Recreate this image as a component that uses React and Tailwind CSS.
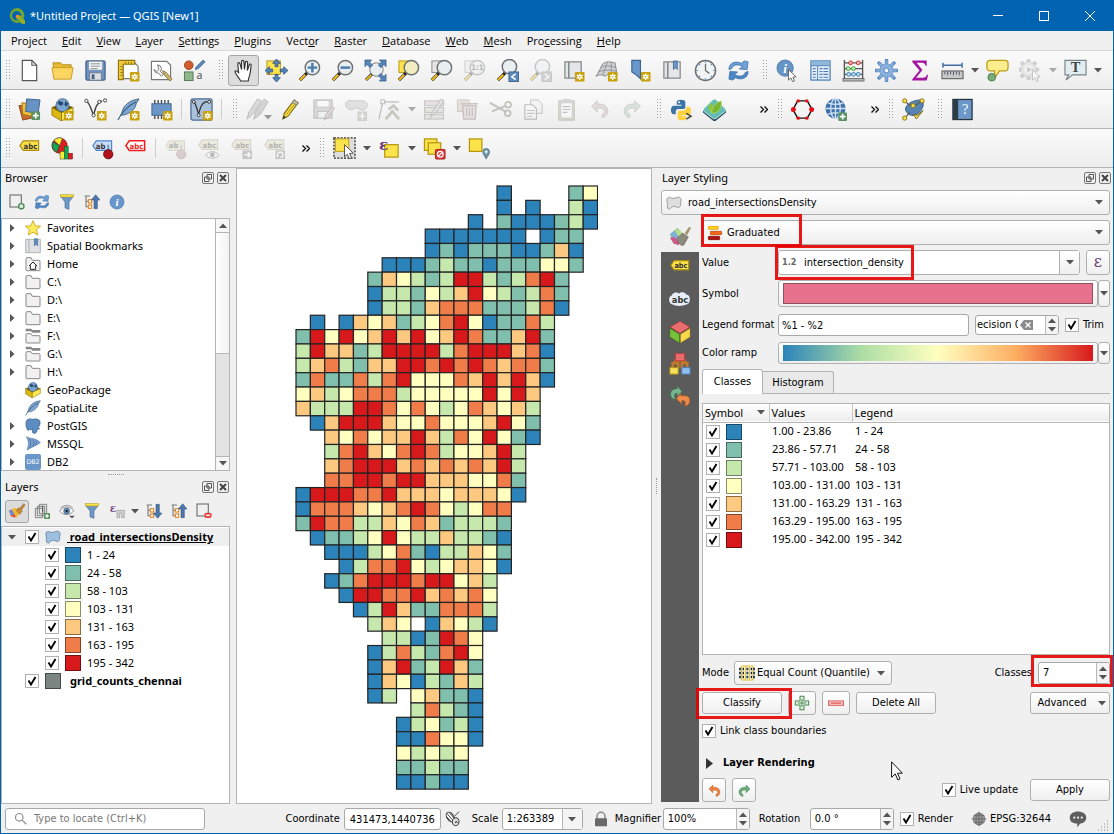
import React from "react";

const COLORS = ["", "#2b83ba", "#80bfab", "#c7e8ad", "#ffffbf", "#fdc980", "#f07c4a", "#d7191c"];

const GRID = [
  "..............1....24",
  "..............1.1..31",
  "............1.2111231",
  ".........1111111.122.",
  ".........12122211251.",
  "......11123221222442.",
  ".....25432377323672..",
  ".....13324357432362..",
  ".....13325666222361..",
  ".1.154523467412263...",
  "274745757457622572...",
  "375523777736777561...",
  "356325577676765662...",
  "262263674446575751...",
  "45346663444447475....",
  "53337764643465453....",
  ".1577754464445742....",
  "..546455753647421....",
  "..36754676344573.....",
  "..56777565656573.....",
  "..66776775554462.....",
  "1777667555455541.....",
  "166654567643466......",
  "276633546523332......",
  ".12234743353321......",
  "..1113462133542......",
  "...136674345541......",
  "..126777677453.......",
  "...17766756564.......",
  "....1375226663.......",
  ".....354.15431.......",
  "......3312764........",
  ".....13632674........",
  ".....15723752........",
  ".....15413253........",
  ".....13.45221........",
  "........36321........",
  ".......134231........",
  ".......116441........",
  ".......43434.........",
  ".......22322.........",
  ".......11211.........",
];

const CLASSES = [
  ["1.00 - 23.86", "1 - 24", "bg-[#2b83ba]"],
  ["23.86 - 57.71", "24 - 58", "bg-[#80bfab]"],
  ["57.71 - 103.00", "58 - 103", "bg-[#c7e8ad]"],
  ["103.00 - 131.00", "103 - 131", "bg-[#ffffbf]"],
  ["131.00 - 163.29", "131 - 163", "bg-[#fdc980]"],
  ["163.29 - 195.00", "163 - 195", "bg-[#f07c4a]"],
  ["195.00 - 342.00", "195 - 342", "bg-[#d7191c]"],
];

const MENUS = ["Pro_ject", "_Edit", "_View", "_Layer", "_Settings", "_Plugins", "Vect_or", "_Raster", "_Database", "_Web", "_Mesh", "Pro_cessing", "_Help"];

/* ---------- shared icon parts ---------- */

const Star = () => (
  <g>
    <rect x="13.5" y="13.5" width="10" height="10" rx="1" fill="#c8a20c" />
    <path d="M18.5 15v7M15.5 16.8l6 3.4M21.500 16.800l-6 3.400" stroke="#fff" strokeWidth="1.400" />
    <circle cx="18.500" cy="18.500" r="2" fill="#fff" />
    <circle cx="18.500" cy="18.500" r="0.800" fill="#c8a20c" />
  </g>
);
const Plus = ({ x = 14, y = 14 }) => (
  <g>
    <rect x={x} y={y} width="9" height="9" rx="1" fill="#5a9161" />
    <path d={`M${x + 4.5} ${y + 1.5}v6M${x + 1.5} ${y + 4.5}h6`} stroke="#fff" strokeWidth="1.800" />
  </g>
);
const Cursor = ({ t }) => (
  <path transform={t} d="M0 0l0 11 2.600-2.200 1.800 3.900 2-.9-1.800-3.800 3.400-.3z" fill="#fff" stroke="#555" strokeWidth="0.900" />
);
const Lens = ({ cx = 15, cy = 9, fill = "#e9eef0", children }) => (
  <g>
    <path d="M9.500 14.500L2 22" stroke="#222" strokeWidth="3.200" />
    <path d="M7.500 16.500L2.200 21.800" stroke="#f3bd1b" strokeWidth="2.200" />
    <circle cx={cx} cy={cy} r="7.500" fill={fill} stroke="#6d7072" strokeWidth="1.500" />
    {children}
  </g>
);
const Tag = ({ fill, stroke, text, color, y = 6 }) => (
  <g>
    <path d={`M2 ${y + 5}l3.500-5h16v10h-16z`} fill={fill} stroke={stroke} strokeWidth="1.200" />
    <text x="13" y={y + 8} textAnchor="middle" fontSize="8" fontWeight="bold" fontFamily="DejaVu Sans Condensed, sans-serif" fill={color}>{text}</text>
  </g>
);
const RefreshShape = () => (
  <g>
    <path d="M2 11C2 4 9 1.500 15 4.500L18 2l4 1-1 8-8-.5 3-3C11 5 6 6 5 10z" fill="#6fa2d8" stroke="#3a6ea5" strokeWidth="0.800" />
    <path d="M22 13c0 7-7 9.500-13 6.500L6 22l-4-1 1-8 8 .5-3 3c5 2.500 10 1.500 11-2.500z" fill="#4b86c6" stroke="#3a6ea5" strokeWidth="0.800" />
  </g>
);
const FilterShape = () => (
  <g>
    <path d="M2 3h20l-7 9v11l-6-2v-9z" fill="#6d97c4" stroke="#4a6f9c" strokeWidth="1" />
    <rect x="2" y="1" width="20" height="3.500" fill="#f7e04b" stroke="#b59a18" strokeWidth="0.800" />
  </g>
);
const GeoPkg = () => (
  <g>
    <path d="M1 10l10-4 12 4-12 6z" fill="#6b5200" stroke="#8a6d00" strokeWidth="1" />
    <circle cx="12" cy="7.500" r="6.800" fill="#7ba5d1" stroke="#335b87" strokeWidth="0.800" />
    <path d="M8 3l4 1 1 2.500-3 1.500-3-2zM15 3l3 3-2 3-2-2z" fill="#27476d" />
    <path d="M1 10l10 5.500V24L1 18z" fill="#dcb814" stroke="#8a6d00" strokeWidth="0.800" />
    <path d="M11 15.500l12-5.500V17l-12 7z" fill="#fcea52" stroke="#8a6d00" strokeWidth="0.800" />
  </g>
);
const Feather = ({ fill = "#7ea6d0" }) => (
  <g>
    <path d="M23 1C13 2 6 8 5 16l-1 2c7 0 15-5 16-12z" fill={fill} stroke="#3d5d80" strokeWidth="0.900" />
    <path d="M1 23C5 15 12 8 20 4" stroke="#3d5d80" fill="none" strokeWidth="1.200" />
  </g>
);
const TreeArrow = ({ up }) => (
  <g>
    <path d="M1 3h8M3 3v17M3 11h4M3 19h4" stroke="#777" strokeWidth="1.600" fill="none" />
    <rect x="6.500" y="8.500" width="5" height="5" fill="#fff" stroke="#e0801c" strokeWidth="1.600" />
    <rect x="6.500" y="16.500" width="5" height="5" fill="#fff" stroke="#e0801c" strokeWidth="1.600" />
    <path d={up ? "M15 22V9h-4l6.500-8L24 9h-4v13z" : "M15 2v13h-4l6.500 8L24 15h-4V2z"} fill="#4c77aa" stroke="#2e5280" strokeWidth="0.800" />
  </g>
);
const Poly = ({ fill = "#9dc0de", stroke = "#5d7f9d" }) => (
  <path d="M2 5c4-3 6 1 10 0s8-3 10 0-1 6 0 9-3 6-6 4-7-1-9 2-6 0-5-4-2-8 0-11z" fill={fill} stroke={stroke} strokeWidth="1.200" />
);
const CurveArrow = ({ fill, stroke }) => (
  <path d="M2 9l7-7v4c8 0 13 3 13 9 0 4-3 7-7 8v-4c2-1 3-2 3-4 0-3-4-4-9-4v5z" fill={fill} stroke={stroke} strokeWidth="1" />
);
const Roll = () => (
  <g>
    <path d="M3 3h4v17H3zM7 3h13v17H5" fill="#e4e6e7" stroke="#85898b" strokeWidth="1.300" />
    <path d="M7 3v17" stroke="#85898b" strokeWidth="1.300" />
  </g>
);
const Mag = ({ children }) => <g opacity="0.35">{children}</g>;

/* ---------- icons ---------- */

const ICONS = {
  newFile: <g><path d="M4.500 1.500h10l5 5v16h-15z" fill="#fff" stroke="#555" strokeWidth="1.200" /><path d="M14.500 1.500v5h5" fill="none" stroke="#555" strokeWidth="1.200" /></g>,
  open: <g><path d="M2 4h8l2 2h9v5H3z" fill="#e8b933" stroke="#b58d1d" /><path d="M3 21L1 9h22l-2 12z" fill="#fcd562" stroke="#c99c24" /></g>,
  save: <g><rect x="2" y="2" width="20" height="20" rx="1.500" fill="#6e93c0" stroke="#45628a" strokeWidth="1.300" /><rect x="5" y="2.500" width="14" height="9" fill="#f4f6f7" stroke="#8593a1" strokeWidth="0.600" /><path d="M7 5h10M7 7.500h10M7 10h7" stroke="#8b9298" /><rect x="6" y="14.500" width="12" height="7.500" fill="#dcdfe1" stroke="#6a7683" strokeWidth="0.700" /><rect x="8" y="16" width="3" height="5" fill="#45628a" /></g>,
  layout: <g><path d="M6 3.500h12l4 4v13H6z" fill="#fff" stroke="#777" strokeWidth="1.200" /><path d="M1.500 1.500h17v4H6.500v16h-5z" fill="#f0c93a" stroke="#8f7410" strokeWidth="1.200" /><path d="M6 8H3.500M6 11H3.500M6 14H3.500M6 17H3.500M9 5V3M12 5V3M15 5V3" stroke="#8f7410" /><Star /></g>,
  manager: <g><path d="M1.500 2.500h16l4 4v15h-20z" fill="#fff" stroke="#777" strokeWidth="1.200" /><path d="M8 6a4.500 4.500 0 014 4l-1 3 3 3-2 2-3-3a5 5 0 01-5-4l3 2 2-2z" fill="#eee" stroke="#777" /><path d="M13 12l4 2 6 7-2 2-6-6z" fill="#c9b263" stroke="#7c6d35" strokeWidth="0.800" /></g>,
  style: <g><circle cx="6" cy="6.500" r="4.500" fill="#cf5c2e" stroke="#a14420" /><path d="M13 9l8-8 2 2-7 7-3 1z" fill="#5f8bbd" stroke="#3b6390" strokeWidth="0.800" /><rect x="1.500" y="13.500" width="9" height="9" fill="#8fb98d" stroke="#557a54" /><text x="14" y="21" fontSize="11" fontFamily="Open Sans, sans-serif" fill="#444">a</text></g>,
  hand: <path d="M8 23c-1-3-5-6-6-10 1-1.500 3-.5 4 2L5 5c.2-1.600 2-1.600 2.400 0L9 11 9 2.500c.2-1.500 2.200-1.500 2.400 0L12 11l1-7.500c.3-1.500 2.200-1.300 2.300.2L15 12l2-6c.5-1.300 2.200-.8 2 .6-.7 4-.5 9-2.500 13L16 23z" transform="translate(1 0)" fill="#fff" stroke="#333" strokeWidth="1.200" />,
  pan: <g><rect x="2" y="2" width="14" height="14" fill="#fbe34b" stroke="#b79612" /><path d="M12 0l4 4.500h-2.500V8h-3V4.500H8zM12 24l4-4.500h-2.500V16h-3v3.500H8zM0 12l4.500-4v2.500H8v3H4.500V16zM24 12l-4.500-4v2.500H16v3h3.500V16z" fill="#5584b8" stroke="#2e5280" strokeWidth="0.800" /></g>,
  zoomIn: <Lens><path d="M15 4v10M10 9h10" stroke="#4c7bb0" strokeWidth="2.600" /></Lens>,
  zoomOut: <Lens><path d="M10 9h10" stroke="#4c7bb0" strokeWidth="2.600" /></Lens>,
  zoomFull: <g><path d="M9 15l-7 7" stroke="#222" strokeWidth="3" /><path d="M7.500 16.500L2.200 21.800" stroke="#f3bd1b" strokeWidth="2" /><circle cx="13" cy="11" r="7" fill="#e9eef0" stroke="#777" /><path d="M1 1h7L5.800 3.200 9 6.500 6.500 9 3.200 5.800 1 8zM23 1h-7l2.200 2.200L15 6.500 17.500 9l3.300-3.200L23 8zM23 23h-7l2.200-2.200L15 17.500l2.500-2.500 3.300 3.200L23 16z" fill="#5584b8" stroke="#2e5280" strokeWidth="0.700" /></g>,
  zoomSel: <g><rect x="2" y="2" width="12" height="12" fill="#fbe34b" stroke="#b79612" /><Lens fill="#f1ecc0" /></g>,
  zoomLayer: <g><rect x="2" y="2" width="12" height="12" fill="#e6e6e6" stroke="#888" /><Lens /></g>,
  zoomNative: <Mag><rect x="2" y="2" width="12" height="12" fill="#e6e6e6" stroke="#888" /><Lens><text x="15" y="12" textAnchor="middle" fontSize="8" fontWeight="bold" fontFamily="DejaVu Sans Condensed, sans-serif" fill="#333">1:1</text></Lens></Mag>,
  zoomLast: <g><Lens cx="14" cy="8" /><rect x="13.500" y="13.500" width="10" height="10" fill="#5c8abd" stroke="#40658f" /><path d="M20.500 15.500l-4 3 4 3" stroke="#fff" strokeWidth="1.600" fill="none" /></g>,
  zoomNext: <Mag><Lens cx="14" cy="8" /><rect x="13.500" y="13.500" width="10" height="10" fill="#999" stroke="#777" /><path d="M16.500 15.500l4 3-4 3" stroke="#fff" strokeWidth="1.600" fill="none" /></Mag>,
  newMap: <g><Roll /><Star /></g>,
  new3d: <g><path d="M8 5c4-3 8-2 13-1l2 13c-5-3-9-2-12 1-4-2-7-2-10 0 3-4 5-9 7-13z" fill="#cfd1d2" stroke="#85898b" /><path d="M6 9c5-3 10-2 16 0M3 14c5-3 12-3 20-1M13 3L8 17M17 3l0 12" stroke="#85898b" strokeWidth="0.800" fill="none" /><Star /></g>,
  bookmarkNew: <g><path d="M4 1.500h9v19l-4.500-4-4.500-3z" fill="#6b97ca" stroke="#3d6593" strokeWidth="1.200" /><Star /></g>,
  bookmarks: <g><Roll /><path d="M13 2h4v9l-2-2-2 2z" fill="#6b97ca" stroke="#3d6593" strokeWidth="0.800" /></g>,
  clock: <g><circle cx="12" cy="12" r="10.500" fill="#f1f3f4" stroke="#6d7072" strokeWidth="1.500" /><path d="M12 5v7l4 3" fill="none" stroke="#6d7072" strokeWidth="1.400" /><path d="M12 2.500v1.500M12 20v1.500M2.500 12H4M20 12h1.500M5.300 5.300l1 1M17.700 17.700l1 1M18.700 5.300l-1 1M6.300 17.700l-1 1" stroke="#4c88c4" strokeWidth="1.200" /></g>,
  refresh: <RefreshShape />,
  identify: <g><circle cx="9.500" cy="9.500" r="8.500" fill="#6594c6" stroke="#44719f" strokeWidth="0.800" /><text x="9.500" y="14.500" textAnchor="middle" fontSize="14" fontWeight="bold" fontStyle="italic" fontFamily="Liberation Serif, serif" fill="#fff">i</text><Cursor t="translate(13 11)" /></g>,
  attrs: <g><rect x="2" y="2" width="20" height="20" fill="#e3eefa" stroke="#4f7fb5" strokeWidth="1.300" /><rect x="2.500" y="2.500" width="19" height="4" fill="#8bb8dc" /><path d="M2 7h20M9 7v15" stroke="#4f7fb5" /><path d="M4 10h3M4 13h3M4 16h3M4 19h3M11 10h3M15 10h5M11 13h3M15 13h5M11 16h3M15 16h5M11 19h3M15 19h5" stroke="#4f7fb5" strokeWidth="1.200" /></g>,
  abacus: <g><path d="M2.500 1v21M21.500 1v21M2 4h20M2 10h20M2 16h20" stroke="#555" strokeWidth="1.400" /><rect x="1" y="20.500" width="22" height="2.500" fill="#bbb" stroke="#555" strokeWidth="0.800" /><g fill="#f3b2b2" stroke="#cc2b2b"><circle cx="9" cy="4" r="2" /><circle cx="17" cy="4" r="2" /></g><g fill="#c0eec0" stroke="#35a035"><circle cx="6.500" cy="10" r="2" /><circle cx="12" cy="10" r="2" /></g><g fill="#bcdcf2" stroke="#3b7db5"><circle cx="7" cy="16" r="2" /><circle cx="12" cy="16" r="2" /><circle cx="17" cy="16" r="2" /></g></g>,
  gear: <g><path d="M12 1v22M1 12h22M4.200 4.200l15.600 15.600M19.800 4.200L4.200 19.800" stroke="#5788bf" strokeWidth="3.600" strokeLinecap="round" /><path d="M12 2v20M2 12h20M5 5l14 14M19 5L5 19" stroke="#8ab0dc" strokeWidth="2" strokeLinecap="round" /><circle cx="12" cy="12" r="7" fill="#8ab0dc" stroke="#6d99cb" strokeWidth="0.800" /><circle cx="12" cy="12" r="2.500" fill="#eef3f8" stroke="#5788bf" /></g>,
  sigma: <path d="M4.500 1.500h15v5.500h-1.200c-.6-2-1.500-3-3.800-3H9l6 7.500-6.500 8h7c2.500 0 3.500-1 4.300-3H21L19.500 22.500h-15v-1.500L12 12 4.500 3z" fill="#a3159e" />,
  measure: <g><path d="M2 6.500h20M2 4v5M22 4v5" stroke="#3f6da3" strokeWidth="1.500" /><rect x="1" y="12.500" width="22" height="8" fill="#c6cacc" stroke="#666" strokeWidth="1.200" /><path d="M4 13v3M7 13v4M10 13v3M13 13v4M16 13v3M19 13v4" stroke="#555" /></g>,
  tip: <g><path d="M4 1.500h16a3 3 0 013 3v5a3 3 0 01-3 3h-6L9 20v-7.500H4a3 3 0 01-3-3v-5a3 3 0 013-3z" fill="#fcee8c" stroke="#bd9b12" strokeWidth="1.300" /><circle cx="6" cy="19" r="4" fill="#7cab7b" stroke="#4f8150" /></g>,
  action: <Mag><path d="M10 2v18M1 11h18M3.600 4.600l12.800 12.800M16.400 4.600L3.600 17.400" stroke="#888" strokeWidth="4.500" strokeLinecap="round" /><circle cx="10" cy="11" r="7.500" fill="#ccc" stroke="#aaa" /><circle cx="10" cy="11" r="4.500" fill="#eee" /><path d="M8.500 8l5 3-5 3z" fill="#777" /><Cursor t="translate(14 11)" /></Mag>,
  textNote: <g><path d="M1 1.500h22v15H9L2 22l3-5.500H1z" fill="#e2edf1" stroke="#7a8388" strokeWidth="1.200" /><text x="12" y="14" textAnchor="middle" fontSize="15" fontWeight="bold" fontFamily="Liberation Serif, serif" fill="#444">T</text></g>,

  addLayer: <g><path d="M1 8l11-1 2 14-9 2z" fill="#c96a2d" stroke="#8d4516" /><path d="M4 5l13 1-3 13-9-2z" fill="#f0bf3c" stroke="#a47b13" /><path d="M9 1l14 1-2 14-13-2z" fill="#6892c2" stroke="#3c6290" /><Plus /></g>,
  gpkgNew: <g><GeoPkg /><Star /></g>,
  shpNew: <g><path d="M3 4c3 1 5 10 7 14 2-8 3-13 9-15" fill="none" stroke="#444" strokeWidth="1.500" /><g fill="#fff" stroke="#444"><circle cx="2.500" cy="3" r="1.700" /><circle cx="10" cy="18" r="1.700" /><circle cx="16" cy="4" r="1.700" /><circle cx="22" cy="2.500" r="1.700" /></g><Star /></g>,
  liteNew: <g><Feather /><Star /></g>,
  memNew: <g><path d="M5 2v20M8.500 2v20M12 2v20M15.500 2v20M19 2v20" stroke="#444" strokeWidth="1.400" /><rect x="2" y="6" width="20" height="12" fill="#6c96c8" stroke="#3f6592" /><Star /></g>,
  virtNew: <g><rect x="1" y="1" width="22" height="22" rx="2" fill="#a9c1da" stroke="#486b92" strokeWidth="1.300" /><path d="M4 4c2 1 4 10 5 13 2-8 3-11 7-13l4 0" fill="none" stroke="#333" strokeWidth="1.300" /><g fill="#fff" stroke="#333"><circle cx="4" cy="4" r="1.500" /><circle cx="9" cy="18" r="1.500" /><circle cx="20" cy="4" r="1.500" /></g><Star /></g>,
  edits: <Mag><path d="M1 22l2-7L12 1l4 2-8 13z" fill="#aaa" stroke="#555" /><path d="M8 22l2-7L19 1l4 3-8 13z" fill="#999" stroke="#555" /></Mag>,
  pencil: <g><path d="M4 22l1.500-6L16 2l4 3L9.500 19z" fill="#f5dd3f" stroke="#77651a" strokeWidth="1.100" /><path d="M14 4.500l4 3 2-2.500-4-3z" fill="#bdbdbd" stroke="#777" strokeWidth="0.800" /><path d="M4 22l1-3.500L7.500 20z" fill="#333" /><path d="M7.500 17.500L17 5.500" stroke="#b59a18" /></g>,
  saveEdits: <Mag><rect x="2" y="2" width="19" height="19" fill="#aaa" stroke="#555" /><rect x="5" y="2.500" width="13" height="7" fill="#fff" stroke="#777" /><rect x="6" y="14" width="10" height="7" fill="#eee" stroke="#666" /><path d="M13 23l1-5 7-9 2.500 2-7 9z" fill="#baa" stroke="#544" /></Mag>,
  addPoly: <Mag><path d="M1 5c3-4 7-2 11-2s10-1 11 3-3 8-7 6-5-2-8 0-9-3-7-7z" fill="#bbb" stroke="#777" /><rect x="13" y="14" width="10" height="10" fill="#998" /><path d="M18 15.500v7M15 19h6" stroke="#fff" strokeWidth="1.500" /></Mag>,
  vertex: <Mag><path d="M5 4h17M5 4L1 22" stroke="#555" strokeWidth="1.300" /><rect x="3" y="2" width="4" height="4" fill="#fff" stroke="#444" /><path d="M8 22l8-9M11 12l5-4 5 5M14 13l8 9" stroke="#776" strokeWidth="2.800" fill="none" /></Mag>,
  multi: <Mag><rect x="1.500" y="3" width="20" height="5" fill="#cbb" stroke="#666" /><rect x="1.500" y="10" width="20" height="5" fill="#ccb" stroke="#666" /><rect x="1.500" y="17" width="20" height="5" fill="#ccb" stroke="#666" /><path d="M8 20l2-6 9-13 3 2-9 13z" fill="#bbb" stroke="#555" /></Mag>,
  trash: <Mag><rect x="1.500" y="2" width="12" height="12" fill="#cba" stroke="#877" /><path d="M7 8h14l-1 14H8zM5 6h18" fill="#ccc" stroke="#866" strokeWidth="1.500" /><path d="M11 10v9M14 10v9M17 10v9" stroke="#866" strokeWidth="1.500" /></Mag>,
  cut: <Mag><path d="M1 5l16 9M3 14L18 8" stroke="#665" strokeWidth="2" /><circle cx="20" cy="7" r="3" fill="none" stroke="#665" strokeWidth="1.800" /><circle cx="19.500" cy="16" r="3" fill="none" stroke="#665" strokeWidth="1.800" /></Mag>,
  copy: <Mag><path d="M9 2h8l4 4v10H9z" fill="#eee" stroke="#666" /><path d="M3 7h8l4 4v11H3z" fill="#fff" stroke="#555" strokeWidth="1.200" /><path d="M5 13h8M5 16h8M5 19h6" stroke="#666" strokeWidth="1.200" /></Mag>,
  paste: <Mag><rect x="4" y="3" width="16" height="20" fill="#cca" stroke="#665" strokeWidth="1.200" /><rect x="6" y="5" width="12" height="16" fill="#fff" stroke="#777" /><rect x="8" y="1" width="8" height="4" fill="#999" /><path d="M8 9h8M8 12h8M8 15h5" stroke="#666" strokeWidth="1.200" /></Mag>,
  undoOff: <Mag><g transform="translate(2 1) scale(0.850)"><CurveArrow fill="#baa" stroke="#877" /></g></Mag>,
  redoOff: <Mag><g transform="translate(22 1) scale(-0.850 0.850)"><CurveArrow fill="#aba" stroke="#787" /></g></Mag>,
  python: <g><path d="M7 9V4c0-3 9-3 9 0v5c0 2-1 2.500-3 2.500H9c-2 0-3 1-3 3V17H4c-4 0-4-9 0-9h8V7H7z" fill="#3d74a6" /><path d="M17 9h2c4 0 4 9 0 9h-7v1h5v2c0 3-9 3-9 0v-5c0-2 1-3 3-3h3c2 0 3-1 3-2.500z" fill="#fed23e" /><circle cx="9.500" cy="4.500" r="1" fill="#fff" /><path d="M17 16l5 3-5 3" fill="none" stroke="#444" strokeWidth="1.500" /></g>,
  leaf: <g><path d="M0 13v2l11 9h2l11-9v-2z" fill="#244b5c" /><path d="M1 11L10 2c1-1 3-1 4 0l9 9c1 1 1 2 0 3l-9 7c-1 1-3 1-4 0L1 14c-1-1-1-2 0-3z" fill="#62bdb6" stroke="#e4f2f2" strokeWidth="0.800" /><path d="M6 12c-1-4 1-6 3-7 2 4 2 8 0 11z" fill="#8fc63d" /><path d="M9 16c0-7 4-11 10-13 1 7-2 13-10 13z" fill="#7ab530" stroke="#b4da6c" strokeWidth="0.800" /></g>,
  hex: <g><path d="M7 3h10l5 9-5 9H7l-5-9z" fill="none" stroke="#111" strokeWidth="1.500" /><g fill="#ea0c13"><circle cx="2.500" cy="12" r="2.600" /><circle cx="21.500" cy="12" r="2.600" /><circle cx="7.500" cy="3" r="1.800" /><circle cx="16.500" cy="3" r="1.800" /><circle cx="7.500" cy="21" r="1.800" /><circle cx="16.500" cy="21" r="1.800" /></g></g>,
  globeAdd: <g><circle cx="12" cy="11" r="10.500" fill="#3e73ae" /><path d="M12 .5v21M2 11h21M4 5c5 2 11 2 16 0M4 17c5-2 11-2 16 0" stroke="#cfe0f0" strokeWidth="1.400" fill="none" /><ellipse cx="12" cy="11" rx="5" ry="10.500" fill="none" stroke="#cfe0f0" strokeWidth="1.400" /><Plus x={15} y={15} /></g>,
  topo: <g><path d="M6 7c4-4 10-5 14-5 4 3 2 9-2 13s-9 4-12 1-3-6 0-9z" fill="#5884b4" stroke="#34587f" /><path d="M3 3l4 4 5 2 9-6M3 21l5-6" stroke="#555" strokeWidth="1.200" fill="none" /><g fill="#f8e04a" stroke="#8c7716"><circle cx="2.800" cy="3" r="2.200" /><circle cx="21" cy="3" r="2.200" /><circle cx="11.500" cy="8" r="2.200" /><circle cx="2.800" cy="21" r="2.200" /></g><path d="M12 17l3 5 7-9-6 5z" fill="#f8e04a" stroke="#6f5d10" strokeWidth="0.900" /></g>,
  help: <g><rect x="2" y="1.500" width="20" height="21" fill="#6c97c9" stroke="#26323c" strokeWidth="1.300" /><rect x="2" y="1.500" width="5.500" height="21" fill="#2b3b47" /><text x="14.800" y="17" textAnchor="middle" fontSize="15" fontFamily="Liberation Serif, serif" fill="#fff">?</text></g>,

  labelY: <Tag fill="#fbe04a" stroke="#a98b0d" text="abc" color="#333" y={4} />,
  pie: <g><circle cx="9" cy="9" r="8" fill="#d81e1e" stroke="#7b1010" strokeWidth="0.600" /><path d="M9 9L3 3.500A8 8 0 0112 1.500z" fill="#f9ed2e" stroke="#333" strokeWidth="0.600" /><path d="M9 9l-7-4a8 8 0 004 11z" fill="#18a551" stroke="#333" strokeWidth="0.600" /><rect x="9.500" y="15" width="4.500" height="8" fill="#f9ed2e" stroke="#333" strokeWidth="0.500" /><rect x="14" y="10" width="4" height="13" fill="#18a551" stroke="#0a5c2a" strokeWidth="0.500" /><rect x="18" y="17" width="4.500" height="6" fill="#d81e1e" stroke="#7b1010" strokeWidth="0.500" /></g>,
  labelPin: <g><path d="M2 9l3.500-5h16v10h-16z" fill="#c9defa" stroke="#4f86c9" strokeWidth="1.200" /><text x="10" y="12" textAnchor="middle" fontSize="8" fontWeight="bold" fontFamily="DejaVu Sans Condensed, sans-serif" fill="#333">ab</text><path d="M18 8v8" stroke="#7a99b8" strokeWidth="2" /><circle cx="18" cy="18" r="4.800" fill="#b5121b" stroke="#6f0a10" /></g>,
  labelR: <g><path d="M2 9l3.500-5h16v10h-16z" fill="#fff" stroke="#ef1b1d" strokeWidth="1.600" /><text x="13" y="12" textAnchor="middle" fontSize="8" fontWeight="bold" fontFamily="DejaVu Sans Condensed, sans-serif" fill="#ef1b1d">abc</text></g>,
  labelPinOff: <Mag><path d="M2 9l3.500-5h16v10h-16z" fill="#ddd8b0" stroke="#998" /><text x="10" y="12" textAnchor="middle" fontSize="8" fontWeight="bold" fontFamily="DejaVu Sans Condensed, sans-serif" fill="#333">ab</text><path d="M18 8v8" stroke="#999" strokeWidth="2" /><circle cx="18" cy="18" r="4.800" fill="#a88" stroke="#866" /></Mag>,
  labelEye: <Mag><Tag fill="#ddd8b0" stroke="#998" text="abc" color="#333" y={3} /><path d="M9 19c4-5 10-5 14 0-4 4-10 4-14 0z" fill="#fff" stroke="#555" /><circle cx="16" cy="18.500" r="2.500" fill="#555" /></Mag>,
  labelMove: <Mag><Tag fill="#ddd8b0" stroke="#998" text="abc" color="#333" y={3} /><rect x="13" y="14" width="10" height="9" fill="#777" /><path d="M15 18.500h6M18.500 16l2.500 2.500-2.500 2.500" stroke="#fff" strokeWidth="1.600" fill="none" /></Mag>,
  labelRot: <Mag><Tag fill="#ddd8b0" stroke="#998" text="abc" color="#333" y={3} /><rect x="13" y="14" width="10" height="9" fill="#777" /><path d="M16 21a3 3 0 114 0l-2 0" stroke="#fff" strokeWidth="1.500" fill="none" /></Mag>,
  select: <g><rect x="1" y="1" width="22" height="21" fill="#dedede" stroke="#222" strokeDasharray="2 1.500" strokeWidth="1.300" /><rect x="2.500" y="2" width="14" height="13" fill="#fbe34b" stroke="#c09d10" /><Cursor t="translate(12 8) scale(1.150)" /></g>,
  selExpr: <g><rect x="7" y="8" width="14" height="13" fill="#fbe34b" stroke="#b8960d" strokeWidth="1.300" /><text x="1" y="14" fontSize="16" fontWeight="bold" fontFamily="DejaVu Serif, serif" fill="#6b3d78">ε</text></g>,
  deselect: <g><rect x="1.500" y="2" width="13" height="12" fill="#fbe34b" stroke="#b8960d" strokeWidth="1.300" /><rect x="5.500" y="6" width="13" height="12" fill="#fbe34b" stroke="#b8960d" strokeWidth="1.300" /><rect x="13" y="13" width="10" height="10" rx="1" fill="#d93a3a" stroke="#b01c1c" /><circle cx="18" cy="18" r="3" fill="none" stroke="#fff" strokeWidth="1.300" /><path d="M16 20l4-4" stroke="#fff" strokeWidth="1.300" /></g>,
  selLoc: <g><rect x="1.500" y="2" width="13" height="13" fill="#fbe34b" stroke="#b8960d" strokeWidth="1.300" /><path d="M19 23c-2-4-3.500-5-3.500-7.500a3.500 3.500 0 017 0C22.500 18 21 19 19 23z" fill="#6c93a8" stroke="#4a6c7f" strokeWidth="0.800" /><path d="M19 13.500v4M17 15.500h4" stroke="#fff" /></g>,

  addSq: <g><rect x="1.500" y="1.500" width="17" height="18" fill="none" stroke="#777" strokeWidth="1.800" /><circle cx="18.500" cy="18.500" r="4" fill="#d9ead9" stroke="#4e8a55" strokeWidth="2" /></g>,
  filter: <FilterShape />,
  treeUp: <TreeArrow up />,
  treeDown: <TreeArrow />,
  info: <g><circle cx="12" cy="12" r="10.500" fill="#6896cb" stroke="#4674a8" /><text x="12" y="18" textAnchor="middle" fontSize="17" fontWeight="bold" fontStyle="italic" fontFamily="Liberation Serif, serif" fill="#fff">i</text></g>,
  star: <path d="M12 1l3.300 7.500 8 .7-6 5.400 1.800 8L12 18.300l-7.100 4.300 1.800-8-6-5.400 8-.7z" fill="#fdec5b" stroke="#c79d14" strokeWidth="1.200" />,
  book: <g><path d="M1 2h22v20H1z" fill="#dfe1e2" /><path d="M6 2v20M1 2h22v20H1z" fill="none" stroke="#a3a7aa" strokeWidth="1.200" /><path d="M14 1h5v11l-2.500-3-2.500 3z" fill="#5e89bb" stroke="#3d6593" strokeWidth="0.800" /></g>,
  folder: <path d="M1.500 4a1.500 1.500 0 011.500-1.500h6l2 4h10a1.500 1.500 0 011.500 1.500v13a1 1 0 01-1 1h-19a1 1 0 01-1-1z" fill="#f1f1f1" stroke="#888" strokeWidth="1.500" />,
  home: <g><path d="M1.500 4a1.500 1.500 0 011.500-1.500h6l2 4h10a1.500 1.500 0 011.500 1.500v13a1 1 0 01-1 1h-19a1 1 0 01-1-1z" fill="#f1f1f1" stroke="#888" strokeWidth="1.500" /><path d="M6 15l6-6 6 6M8 14v6h8v-6" fill="#fff" stroke="#222" strokeWidth="1.500" /></g>,
  drive: <g><path d="M1.500 10a1.500 1.500 0 011.500-1.500h6l2 3h10a1.500 1.500 0 011.500 1.500v8.500a1 1 0 01-1 1h-19a1 1 0 01-1-1z" fill="#f1f1f1" stroke="#888" strokeWidth="1.500" /><path d="M1 1h8l2 2h12v4H11L9 5H1z" fill="#888" /></g>,
  gpkg: <GeoPkg />,
  lite: <Feather />,
  pg: <path d="M3 3c4-3 7-1 9-1 3-1 8-1 10 2 2 4-1 9-3 11l3 1-4 1c0 4-1 6-4 6s-3-2-3-7c-1 2-3 2-4 1l-2 2c-3-2-5-12-2-16z" fill="#5d8dc0" stroke="#3c6590" strokeWidth="1.200" />,
  ms: <g><path d="M2 1c6 4 14 1 21 9-6 4-12 6-20 11 3-7 3-14-1-20z" fill="#7aa2cf" stroke="#4c77a6" /><path d="M7 4c2 5 2 9 0 14M12 5c2 4 1 8 0 11M17 7c1 2 0 4-1 7" fill="none" stroke="#456f9f" strokeWidth="1.300" /></g>,
  db2: <g><rect x="0" y="0" width="24" height="24" rx="3" fill="#6a96c9" /><text x="12" y="15.500" textAnchor="middle" fontSize="9.500" fontFamily="DejaVu Sans, sans-serif" fill="#fff">DB2</text></g>,
  paintbrush: <g><path d="M0 11l8-2 5 6-4 7-6-2z" fill="#e84a3c" /><path d="M0 11l5-1 3 8-6 0z" fill="#6b8fd0" /><path d="M4 9l6-2 6 9-5 6z" fill="#f3b833" /><path d="M11 11l3-4 6 5-4 5zM16 8l6-7 2 2-5 7z" fill="#c98b33" stroke="#7d5417" strokeWidth="0.700" /></g>,
  group: <g><path d="M2 8h11v14H2zM5 5h11v14H5zM8 2h11v14H8z" fill="#e4e6e7" stroke="#777" strokeWidth="1.300" /><path d="M13 4v10" stroke="#555" strokeWidth="1.500" /><Plus x={15} y={15} /></g>,
  eye: <g><path d="M1 12C6 4 17 4 22 12 17 19 6 19 1 12z" fill="#fff" stroke="#8e8e8e" strokeWidth="1.500" /><circle cx="11.500" cy="12" r="4.500" fill="#5f8dbd" stroke="#3f5f82" /><circle cx="11.500" cy="12" r="1.800" fill="#222" /><path d="M2 8C7 2 16 2 21 8" fill="none" stroke="#999" strokeWidth="1.500" /><path d="M15 19h9l-4.500 4z" fill="#555" /></g>,
  exprF: <g><text x="1" y="14" fontSize="16" fontWeight="bold" fontFamily="DejaVu Serif, serif" fill="#7b4a8a">ε</text><path d="M12 11h11v11h-4v-7h-3v7h-4z" fill="#cfcfcf" stroke="#999" /></g>,
  removeSq: <g><rect x="1.500" y="1.500" width="17" height="18" fill="none" stroke="#777" strokeWidth="1.800" /><rect x="12.500" y="14.500" width="11" height="8" rx="3" fill="#e84343" /><path d="M15 18.500h6" stroke="#fff" strokeWidth="2" /></g>,
  poly: <Poly />,
  polyGrey: <Poly fill="#dedede" stroke="#8a8a8a" />,
  brush: <g><path d="M1 10l8-7 7 7-3 9-8 2z" fill="#8fcf8e" /><path d="M5 7l4-3 6 5-6 5z" fill="#b9dd8b" /><path d="M1 10l5-4 5 7-3 6z" fill="#7fb0d8" /><path d="M1 14l5-1 6 6-2 3-5-2z" fill="#d0568a" /><path d="M9 14l6-5 6 4-5 9c-3 1-7-2-7-8z" fill="#8c897f" stroke="#6d6a60" strokeWidth="0.800" /><path d="M17 9l5-7 2 1-4 8z" fill="#a79572" /></g>,
  abcHalo: <g><path d="M3 7c1-4 6-4 8-2 3-3 7-1 8 1 5 0 5 10 0 11-4 2-12 2-15 0-5-1-5-9-1-10z" fill="#e6edf7" /><text x="12" y="15.500" textAnchor="middle" fontSize="10" fontWeight="bold" fontFamily="DejaVu Sans Condensed, sans-serif" fill="#333">abc</text></g>,
  cube: <g strokeWidth="0.500"><path d="M12 0l11 6.500-11 7L1 6.500z" fill="#e96d6d" stroke="#7d1414" /><path d="M1 8l10.500 6.500V24L1 17.500z" fill="#76c33a" stroke="#2f6410" /><path d="M23 8l-10.500 6.500V24L23 17.500z" fill="#f7d94c" stroke="#8a6d00" /></g>,
  nodes: <g><path d="M4 17v-6h3V7M20 17v-6h-3V7M10 8v9M14 8v9" fill="none" stroke="#c0782a" strokeWidth="3" /><rect x="7" y="0.500" width="10" height="8" fill="#e96a6a" stroke="#c23b3b" /><rect x="1" y="16" width="9" height="7" fill="#f6df5a" stroke="#b89613" /><rect x="14" y="16" width="9" height="7" fill="#93bdf0" stroke="#4a7fc0" /></g>,
  history: <g><path d="M9 1v3C3 4 0 8 3 14c1 1 3 2 4 1-2-4-1-6 2-6v4l5-6z" fill="#76b58d" stroke="#3f7c56" strokeWidth="0.700" /><path d="M13 9l-5 6 6 6v-4c4 0 5 2 3 6 5 0 7-5 5-9-1-2-4-3-9-2z" fill="#ee8a4a" stroke="#ab5318" strokeWidth="0.700" /></g>,
  grad: <g><rect x="2" y="2" width="15" height="4.500" rx="1" fill="#fcd21c" stroke="#d79a00" /><rect x="5" y="9.500" width="17" height="5" rx="1" fill="#f06a1a" stroke="#b53b00" /><rect x="2" y="17" width="17" height="5" rx="1" fill="#b01010" stroke="#700" /></g>,
  quantile: <g><rect x="4" y="1.500" width="17" height="21" rx="1" fill="#fffbe6" stroke="#dcbc2c" strokeWidth="1.800" /><path d="M9.500 2v20M15.500 2v20" stroke="#dcbc2c" strokeWidth="1.500" /><path d="M1.500 4v18M12.500 4v18M22.500 4v18" stroke="#23436b" strokeWidth="3" strokeDasharray="4 2" /><path d="M6.500 4v18M18.500 4v18" stroke="#222" strokeWidth="2" strokeDasharray="4 2" /></g>,
  plusBtn: <path d="M9 2h6v7h7v6h-7v7H9v-7H2V9h7zM12 5.500v13M5.500 12h13" fill="#eef8ec" stroke="#4b8a56" strokeWidth="1.600" />,
  minusBtn: <path d="M1 9h22v6.500H1zM4 12.200h16" fill="#fbe3e3" stroke="#e34a4a" strokeWidth="1.600" />,
  undo: <CurveArrow fill="#ee8240" stroke="#b9561a" />,
  redo: <g transform="translate(24 0) scale(-1 1)"><CurveArrow fill="#6cab7a" stroke="#3f7c4d" /></g>,
  mouse: <g><ellipse cx="8" cy="9" rx="5" ry="8" transform="rotate(-35 8 9)" fill="#fff" stroke="#444" strokeWidth="1.600" /><ellipse cx="16" cy="16" rx="5" ry="6" fill="#ddd" stroke="#444" strokeWidth="1.600" /><path d="M3 4l8 9M6 2l8 9M2 8l7 8M14 8l7-7M16 15l3 3M15 18l3-3" stroke="#444" strokeWidth="1.500" /></g>,
  lock: <g><path d="M6 12V8a6 6 0 0112 0v4" fill="none" stroke="#888" strokeWidth="2.200" /><rect x="3" y="11" width="18" height="12" rx="1" fill="#6a6a6a" /></g>,
  crs: <g><circle cx="12" cy="12" r="9" fill="#9a9a9a" stroke="#6b6b6b" /><path d="M12 1v22M1 12h22M4 7h16M4 17h16" stroke="#5f5f5f" strokeWidth="1.100" /><ellipse cx="12" cy="12" rx="4.500" ry="9" fill="none" stroke="#5f5f5f" /></g>,
  chat: <g><path d="M12 2c6 0 11 3 11 8s-4 8-8 8l-4 5v-5C4 18 1 15 1 10s5-8 11-8z" fill="#5f5f5f" /><g fill="#f0f0f0"><circle cx="7" cy="10" r="1.500" /><circle cx="12" cy="10" r="1.500" /><circle cx="17" cy="10" r="1.500" /></g></g>,
  search: <g fill="none" stroke="#8b8b8b" strokeWidth="2"><circle cx="9" cy="9" r="6.500" /><path d="M14 14l7 7" /></g>,
};

const Icon = ({ n, className = "size-[23px]" }) => (
  <svg viewBox="0 0 24 24" className={className + " shrink-0"} aria-hidden="true">{ICONS[n]}</svg>
);

const Down = ({ className = "text-[#555]" }) => (
  <svg viewBox="0 0 8 5" className={"h-[5px] w-2 shrink-0 " + className} aria-hidden="true"><path d="M0 0h8L4 4.500z" fill="currentColor" /></svg>
);

/* ---------- toolbars ---------- */

const Handle = ({ first }) => (
  <span className={(first ? "w-3 pr-[3px]" : "w-4 pr-1") + " flex h-full shrink-0 items-center justify-end"}>
    <svg viewBox="0 0 4 20" className="h-5 w-1" aria-hidden="true">
      {[0, 3, 6, 9, 12, 15, 18].map((y) => <path key={y} d={`M0 ${y}.5h1M3 ${y}.5h1`} stroke="#a0a0a0" />)}
    </svg>
  </span>
);
const Sep = () => <span className="flex h-5 w-[7px] shrink-0 justify-center"><span className="w-px bg-[#cfcfcf]" /></span>;
const Arrow = ({ off }) => (
  <button aria-label="More" className="flex h-full w-3 shrink-0 items-center justify-center"><Down className={off ? "text-[#aaa]" : "text-[#555]"} /></button>
);
const More = ({ w }) => (
  <button aria-label="Show more tools" className={w + " flex h-full shrink-0 items-center justify-end pr-0.5"}>
    <svg viewBox="0 0 8 7" className="h-[7px] w-2" aria-hidden="true"><path d="M.5.5l3 3-3 3M4.500.5l3 3-3 3" fill="none" stroke="#111" strokeWidth="1.400" /></svg>
  </button>
);
const Tool = ({ n, pressed, menu }) => (
  <button aria-label={n} className="relative flex h-full w-[33px] shrink-0 items-center justify-center">
    {pressed ? (
      <span className="flex size-[31px] items-center justify-center rounded-[3px] border border-[#a5a5a5] bg-[#dcdcdc]"><Icon n={n} /></span>
    ) : <Icon n={n} />}
    {menu && <span className="absolute right-0.5 bottom-2"><Down className="text-[#999]" /></span>}
  </button>
);
const Bar = ({ items }) => (
  <div role="toolbar" className="flex h-[39px] items-center overflow-hidden border-b border-[#b4b4b4] bg-linear-to-b from-[#fbfbfb] to-[#ededed]">
    {items.split(" ").map((k, i) => {
      if (k === "|") return <Handle key={i} first={i === 0} />;
      if (k === "/") return <Sep key={i} />;
      if (k === "v") return <Arrow key={i} />;
      if (k === "o") return <Arrow key={i} off />;
      if (k === "m39") return <More key={i} w="w-[39px]" />;
      if (k === "m29") return <More key={i} w="w-[29px]" />;
      if (k === "m21") return <More key={i} w="w-[21px]" />;
      return <Tool key={i} n={k} pressed={k === "hand"} menu={k === "edits"} />;
    })}
  </div>
);

/* ---------- form parts ---------- */

const Check = ({ id, label }) => (
  <span className="grid size-[14px] shrink-0">
    <input id={id} type="checkbox" defaultChecked aria-label={label} className="peer m-0 size-[14px] appearance-none border border-[#b0b0b0] bg-white [grid-area:1/1]" />
    <svg viewBox="0 0 14 14" className="pointer-events-none invisible size-[14px] [grid-area:1/1] peer-checked:visible" aria-hidden="true">
      <path d="M3.500 6.500l2.500 4L10.500 3" fill="none" stroke="#000" strokeWidth="1.900" />
    </svg>
  </span>
);
const Swatch = ({ c }) => <span className={c + " size-4 shrink-0 border border-black/45"} />;

const DockButtons = () => (
  <span className="flex gap-[3px]">
    <button aria-label="Float panel" className="grid size-3 place-items-center rounded-[2px] border border-[#777]">
      <svg viewBox="0 0 8 8" className="size-2" aria-hidden="true"><path d="M3 .5h4.500V5H3zM.5 3H5v4.500H.5z" fill="none" stroke="#555" /></svg>
    </button>
    <button aria-label="Close panel" className="grid size-3 place-items-center rounded-[2px] border border-[#777]">
      <svg viewBox="0 0 8 8" className="size-2" aria-hidden="true"><path d="M1 1l6 6M7 1L1 7" stroke="#444" strokeWidth="2" /></svg>
    </button>
  </span>
);

const BTN = "flex items-center justify-center rounded-[3px] border border-[#b0b0b0] bg-linear-to-b from-white to-[#efefef]";

const SpinButtons = () => (
  <span className="flex w-[13px] shrink-0 flex-col items-center justify-center gap-1 rounded-r-[2px] border-l border-[#b8b8b8] bg-[#f4f4f4]">
    <button aria-label="Increase"><svg viewBox="0 0 8 5" className="h-[5px] w-2" aria-hidden="true"><path d="M0 5h8L4 .5z" fill="#555" /></svg></button>
    <button aria-label="Decrease"><svg viewBox="0 0 8 5" className="h-[5px] w-2" aria-hidden="true"><path d="M0 0h8L4 4.500z" fill="#555" /></svg></button>
  </span>
);
const Spin = ({ id, value, className }) => (
  <span className={className + " flex h-[22px] rounded-[3px] border border-[#a8a8a8] bg-white"}>
    <input id={id} defaultValue={value} className="min-w-0 flex-1 bg-transparent pl-1 outline-none" />
    <SpinButtons />
  </span>
);

const Combo = ({ label, icon, value, className, pad = "pl-6" }) => (
  <span className={className + " relative flex items-center"}>
    <select aria-label={label} className={pad + " size-full appearance-none rounded-[3px] border border-[#b0b0b0] bg-linear-to-b from-white to-[#efefef] outline-none"}>
      <option>{value}</option>
    </select>
    {icon && <span className="pointer-events-none absolute left-[5px]"><Icon n={icon} className="size-4" /></span>}
    <span className="pointer-events-none absolute right-[7px]"><Down /></span>
  </span>
);

const Mark = ({ className }) => <span className={className + " pointer-events-none absolute z-10 border-3 border-[#e60000]/90"} />;

/* ---------- docks ---------- */

const BROWSER = [
  ["star", "Favorites", 1], ["book", "Spatial Bookmarks", 1], ["home", "Home", 1],
  ["folder", "C:\\", 1], ["folder", "D:\\", 1], ["folder", "E:\\", 1],
  ["drive", "F:\\", 1], ["drive", "G:\\", 1], ["folder", "H:\\", 1],
  ["gpkg", "GeoPackage", 0], ["lite", "SpatiaLite", 0], ["pg", "PostGIS", 1],
  ["ms", "MSSQL", 1], ["db2", "DB2", 1],
];

const Small = ({ n }) => (
  <button aria-label={n} className="flex h-6 w-[25px] shrink-0 items-center justify-center"><Icon n={n} className="size-4" /></button>
);

function BrowserDock() {
  return (
    <section>
      <header className="flex h-5 items-center justify-between pr-px pl-1">
        <h2>Browser</h2>
        <DockButtons />
      </header>
      <div className="mb-0.5 flex h-7 items-center pl-[3px]">
        {["addSq", "refresh", "filter", "treeUp", "info"].map((n) => <Small key={n} n={n} />)}
      </div>
      <div className="flex h-[253px] border border-[#b4b4b4] bg-white">
        <ul className="min-w-0 flex-1 overflow-hidden">
          {BROWSER.map(([icon, name, more]) => (
            <li key={name} className="flex h-[18px] items-center pl-2">
              <span className="w-[15px]">
                {more ? <button aria-label={"Expand " + name} className="flex h-[18px] items-center"><svg viewBox="0 0 5 8" className="h-2 w-[5px]" aria-hidden="true"><path d="M0 0l4.500 4L0 8z" fill="#555" /></svg></button> : null}
              </span>
              <Icon n={icon} className="size-4" />
              <span className="pl-1.5">{name}</span>
            </li>
          ))}
        </ul>
        <div className="flex w-[14px] flex-col border-l border-[#b4b4b4] bg-[#e3e3e3]">
          <button aria-label="Scroll up" className="flex h-[14px] items-center justify-center border-b border-[#b4b4b4] bg-[#f6f6f6]"><svg viewBox="0 0 8 5" className="h-[5px] w-2" aria-hidden="true"><path d="M0 5h8L4 .5z" fill="#555" /></svg></button>
          <span className="h-[121px] border-b border-[#b4b4b4] bg-linear-to-r from-white to-[#f3f3f3]" />
          <span className="flex-1" />
          <button aria-label="Scroll down" className="flex h-[14px] items-center justify-center border-t border-[#b4b4b4] bg-[#f6f6f6]"><Down /></button>
        </div>
      </div>
    </section>
  );
}

function LayersDock() {
  return (
    <section className="flex flex-1 flex-col">
      <header className="flex h-5 items-center justify-between pr-px pl-1">
        <h2>Layers</h2>
        <DockButtons />
      </header>
      <div className="mb-px flex h-7 items-center pl-1">
        <button aria-label="Open layer styling" className="flex h-[23px] w-6 items-center justify-center rounded-[3px] border border-[#a5a5a5] bg-[#dcdcdc]"><Icon n="paintbrush" className="size-4" /></button>
        <Small n="group" />
        <Small n="eye" />
        <Small n="filter" />
        <Small n="exprF" />
        <button aria-label="Filter options" className="flex h-6 w-3 items-center justify-center"><Down /></button>
        <Small n="treeDown" />
        <Small n="treeUp" />
        <Small n="removeSq" />
      </div>
      <ul className="flex-1 border border-[#b4b4b4] bg-white pt-px">
        <li className="flex h-[18px] items-center bg-[#efefef] pl-1.5">
          <button aria-label="Collapse layer" className="w-[17px]"><Down /></button>
          <Check label="road_intersectionsDensity" />
          <span className="w-1.5" />
          <Icon n="poly" className="size-4" />
          <span className="pl-1.5 font-bold whitespace-pre underline">{" road_intersectionsDensity"}</span>
        </li>
        {CLASSES.map(([, name, c]) => (
          <li key={name} className="flex h-[18px] items-center gap-1.5 pl-[43px]">
            <Check label={name} />
            <Swatch c={c} />
            <span>{name}</span>
          </li>
        ))}
        <li className="flex h-[18px] items-center gap-1.5 pl-[23px]">
          <Check label="grid_counts_chennai" />
          <Swatch c="bg-[#7b8682]" />
          <span className="pl-[3px] font-bold">grid_counts_chennai</span>
        </li>
      </ul>
    </section>
  );
}

function MapCanvas() {
  const s = 14.36;
  return (
    <main className="flex flex-1 items-center justify-center border border-[#b4b4b4] bg-white pt-[3px] pl-1">
      <svg viewBox="-1 -1 303 605" className="h-[605px] w-[303px]" role="img" aria-label="Road intersection density grid">
        {GRID.map((row, r) => row.split("").map((c, i) => c === "." ? null : (
          <rect key={r + "-" + i} x={i * s} y={r * s} width={s} height={s} fill={COLORS[+c]} stroke="#232323" strokeWidth="1.200" />
        )))}
      </svg>
    </main>
  );
}

function StylingDock() {
  const L = "w-[76px] shrink-0";
  return (
    <section className="flex w-[449px] shrink-0 flex-col font-['DejaVu_Sans_Condensed','Noto_Sans',sans-serif]">
      <header className="-mr-px flex h-[22px] items-center justify-between pb-0.5 font-['Noto_Sans',sans-serif]">
        <h2 className="pl-px">Layer Styling</h2>
        <DockButtons />
      </header>
      <Combo label="Layer" icon="polyGrey" value="road_intersectionsDensity" className="h-[25px]" pad="pl-[26px]" />
      <div className="mt-1 flex flex-1 pb-0.5">
        <nav className="flex w-[38px] shrink-0 flex-col">
          <button aria-label="Symbology" className="flex h-[33px] items-center justify-center"><Icon n="brush" className="size-[22px]" /></button>
          <div className="flex flex-1 flex-col bg-[#5b5b5b]">
            {["labelY", "abcHalo", "cube", "nodes", "history"].map((n) => (
              <button key={n} aria-label={n} className="flex h-8 items-center justify-center"><Icon n={n} className="size-[22px]" /></button>
            ))}
          </div>
        </nav>
        <form className="flex min-w-0 flex-1 flex-col pt-px pl-[3px]" onSubmit={(e) => e.preventDefault()}>
          <div className="relative">
            <Combo label="Renderer" icon="grad" value="Graduated" className="h-[25px]" />
            <Mark className="-top-1.5 -left-px h-[33px] w-[101px]" />
          </div>
          <div className="mt-[5px] flex items-center">
            <label htmlFor="value" className={L}>Value</label>
            <span className="relative flex h-[25px] flex-1 rounded-[3px] border border-[#b0b0b0] bg-white">
              <span className="w-[25px] pt-[3px] pl-[3px] text-[9px] font-bold text-[#666]">1.2</span>
              <input id="value" defaultValue="intersection_density" className="min-w-0 flex-1 bg-transparent outline-none" />
              <button aria-label="Show fields" className="flex w-5 items-center justify-center border-l border-[#b0b0b0] bg-linear-to-b from-white to-[#efefef]"><Down /></button>
              <Mark className="-top-1.5 -left-1 h-[35px] w-[139px]" />
            </span>
            <button aria-label="Expression" className={BTN + " ml-1.5 h-[25px] w-6 pb-0.5 font-['DejaVu_Serif',serif] text-base leading-none text-[#6b3d78]"}>ε</button>
          </div>
          <div className="mt-[5px] flex items-center">
            <span className={L}>Symbol</span>
            <button aria-label="Symbol" className={BTN + " h-[27px] flex-1 px-1"}><span className="h-[21px] w-full border border-[#8d5361] bg-[#e8718d]" /></button>
            <button aria-label="Symbol options" className={BTN + " h-[27px] w-3"}><Down /></button>
          </div>
          <div className="mt-[7px] flex items-center">
            <label htmlFor="legend" className={L}>Legend format</label>
            <input id="legend" defaultValue="%1 - %2" className="h-[22px] min-w-0 flex-1 rounded-[3px] border border-[#a8a8a8] bg-white px-[3px] outline-none" />
            <span className="mx-1.5 flex h-5 w-[84px] items-center rounded-[3px] border border-[#a8a8a8] bg-white">
              <input aria-label="Precision" defaultValue="ecision 0" className="w-[42px] pl-px outline-none" />
              <button aria-label="Clear" className="ml-0.5 flex">
                <svg viewBox="0 0 13 10" className="h-[10px] w-[13px]" aria-hidden="true"><path d="M4 0h9v10H4L0 5z" fill="#8a8a8a" /><path d="M5.500 2.500l5 5M10.500 2.500l-5 5" stroke="#fff" strokeWidth="1.300" /></svg>
              </button>
              <span className="flex-1" />
              <span className="flex h-full"><SpinButtons /></span>
            </span>
            <Check id="trim" />
            <label htmlFor="trim" className="w-[31px] pl-1">Trim</label>
          </div>
          <div className="mt-1.5 flex items-center">
            <span className={L}>Color ramp</span>
            <button aria-label="Color ramp" className={BTN + " h-[22px] flex-1 px-1"}><span className="h-4 w-full bg-[linear-gradient(to_right,#2b83ba,#abdda4_25%,#ffffbf_50%,#fdae61_75%,#d7191c)]" /></button>
            <button aria-label="Color ramp options" className={BTN + " h-[22px] w-3"}><Down /></button>
          </div>
          <div role="tablist" className="mt-[5px] flex h-[25px] items-end border-b border-[#b4b4b4]">
            <button role="tab" aria-selected="true" className="-mb-px h-[25px] w-[61px] rounded-t-[3px] border border-b-0 border-[#b4b4b4] bg-white">Classes</button>
            <button role="tab" aria-selected="false" className="h-[22px] w-[71px] rounded-tr-[3px] border border-b-0 border-l-0 border-[#b4b4b4] bg-[#e9e9e9]">Histogram</button>
          </div>
          <div className="mt-[9px] flex-1 border border-[#b4b4b4] bg-white font-['Noto_Sans',sans-serif]">
            <table className="w-full table-fixed border-collapse text-left">
              <thead>
                <tr className="h-[18px] border-b border-[#b4b4b4] bg-linear-to-b from-white to-[#ededed]">
                  <th className="w-[66px] border-r border-[#c8c8c8] py-0 pl-0.5 font-normal">
                    <button className="flex w-full items-center justify-between pr-1">Symbol<Down /></button>
                  </th>
                  <th className="w-[83px] border-r border-[#c8c8c8] py-0 pl-0.5 font-normal">Values</th>
                  <th className="py-0 pl-0.5 font-normal">Legend</th>
                </tr>
              </thead>
              <tbody>
                {CLASSES.map(([v, l, c]) => (
                  <tr key={v} className="h-[18px]">
                    <td className="p-0"><span className="flex items-center gap-1.5 pl-[3px]"><Check label={v} /><Swatch c={c} /></span></td>
                    <td className="p-0 pb-0.5 pl-[3px] leading-4 whitespace-nowrap">{v}</td>
                    <td className="p-0 pb-0.5 pl-[3px] leading-4 whitespace-nowrap">{l}</td>
                  </tr>
                ))}
              </tbody>
            </table>
          </div>
          <div className="mt-1.5 flex h-6 items-center">
            <span className="w-8">Mode</span>
            <Combo label="Mode" icon="quantile" value="Equal Count (Quantile)" className="h-6 w-[158px]" pad="pl-[22px]" />
            <label htmlFor="classes" className="ml-auto pr-1.5">Classes</label>
            <span className="relative">
              <Spin id="classes" value="7" className="w-[72px]" />
              <Mark className="-top-[7px] -right-[3px] h-8 w-[82px]" />
            </span>
          </div>
          <div className="mt-1.5 flex h-6 items-center gap-1.5">
            <span className="relative">
              <button className={BTN + " h-[22px] w-20"}>Classify</button>
              <Mark className="-top-1 -left-1.5 h-[31px] w-24" />
            </span>
            <button aria-label="Add class" className={BTN + " h-6 w-7"}><Icon n="plusBtn" className="size-4" /></button>
            <button aria-label="Delete class" className={BTN + " h-6 w-7"}><Icon n="minusBtn" className="size-4" /></button>
            <button className={BTN + " h-[22px] w-20"}>Delete All</button>
            <button className={BTN + " ml-auto h-[22px] w-20 gap-3 pl-1"}>Advanced<Down /></button>
          </div>
          <div className="mt-[9px] flex h-3.5 items-center gap-1">
            <Check id="link" />
            <label htmlFor="link">Link class boundaries</label>
          </div>
          <div className="relative mt-[17px] flex h-4">
            <button className="flex items-center gap-2.5 pl-1 font-bold">
              <svg viewBox="0 0 7 11" className="h-[11px] w-[7px]" aria-hidden="true"><path d="M0 0l7 5.500L0 11z" fill="#333" /></svg>
              Layer Rendering
            </button>
            <svg viewBox="0 0 12 20" className="pointer-events-none absolute top-1.5 left-[189px] h-5 w-3" aria-hidden="true"><path d="M.6.8v15.500l3.700-3.400 2.500 6 2.200-1-2.500-5.700h4.900z" fill="#fff" stroke="#111" /></svg>
          </div>
          <div className="mt-[7px] flex h-6 items-center gap-1.5">
            <button aria-label="Undo" className={BTN + " size-6"}><Icon n="undo" className="size-[13px]" /></button>
            <button aria-label="Redo" className={BTN + " size-6"}><Icon n="redo" className="size-[13px]" /></button>
            <span className="ml-auto flex items-center gap-1 pr-1.5">
              <Check id="live" />
              <label htmlFor="live">Live update</label>
            </span>
            <button className={BTN + " h-[22px] w-20"}>Apply</button>
          </div>
        </form>
      </div>
    </section>
  );
}

function StatusBar() {
  return (
    <footer className="flex h-7 items-center font-['DejaVu_Sans_Condensed','Noto_Sans',sans-serif]">
      <label className="ml-1 flex h-[22px] w-[200px] items-center gap-1.5 rounded-[3px] border border-[#a8a8a8] bg-white pl-2">
        <Icon n="search" className="size-3.5" />
        <input aria-label="Locator" placeholder="Type to locate (Ctrl+K)" className="min-w-0 flex-1 bg-transparent outline-none placeholder:text-[#777]" />
      </label>
      <span className="flex-1" />
      <label htmlFor="coord" className="pr-1">Coordinate</label>
      <input id="coord" defaultValue="431473,1440736" className="h-[22px] w-[97px] rounded-[3px] border border-[#a8a8a8] bg-white text-center outline-none" />
      <button aria-label="Toggle extents" className="flex w-[25px] justify-center"><Icon n="mouse" className="size-4" /></button>
      <label htmlFor="scale" className="w-9 pl-1.5">Scale</label>
      <span className="flex h-[22px] w-[81px] rounded-[3px] border border-[#a8a8a8] bg-white">
        <input id="scale" defaultValue="1:263389" className="min-w-0 flex-1 bg-transparent pl-1 outline-none" />
        <button aria-label="Scale list" className="flex w-5 items-center justify-center border-l border-[#b8b8b8] bg-[#f4f4f4]"><Down /></button>
      </span>
      <button aria-label="Lock scale" className="flex w-8 justify-center pl-1"><Icon n="lock" className="size-4" /></button>
      <label htmlFor="mag" className="w-12 whitespace-nowrap">Magnifier</label>
      <Spin id="mag" value="100%" className="w-[87px]" />
      <label htmlFor="rot" className="w-[60px] pl-[9px]">Rotation</label>
      <Spin id="rot" value="0.0 °" className="mr-1.5 w-[84px]" />
      <Check id="render" />
      <label htmlFor="render" className="pl-1">Render</label>
      <button className="flex items-center gap-[3px] pl-[18px]"><Icon n="crs" className="size-4" />EPSG:32644</button>
      <button aria-label="Messages" className="mr-2.5 ml-[18px]"><Icon n="chat" className="size-[18px]" /></button>
      <svg viewBox="0 0 12 12" className="mr-1 mb-px size-3 self-end text-[#aaa]" aria-hidden="true">
        <path d="M10 1h1M7 4h1M10 4h1M4 7h1M7 7h1M10 7h1M1 10h1M4 10h1M7 10h1M10 10h1" stroke="currentColor" strokeWidth="1.300" />
      </svg>
    </footer>
  );
}

export default function App() {
  return (
    <div className="flex min-h-screen flex-col border-x border-b border-[#0063b1] bg-[#f0f0f0] font-['Noto_Sans',sans-serif] text-[11px] leading-4 text-black">
      <header className="flex h-[31px] items-center bg-[#0063b1] pl-2 text-white">
        <svg viewBox="0 0 16 16" className="size-4" aria-hidden="true">
          <path d="M8 0a7.500 7.500 0 103 14.500L8.500 12A4.500 4.500 0 1112 8.500l2.500 2.500A7.500 7.500 0 008 0z" fill="#6ea534" />
          <path d="M7 7h3.500l5.500 5.500V16h-3L7 10z" fill="#93b023" />
          <circle cx="8.500" cy="8.500" r="1.800" fill="#f28c28" />
        </svg>
        <h1 className="flex-1 pl-[5px]">*Untitled Project — QGIS [New1]</h1>
        <button aria-label="Minimize" className="grid h-full w-[46px] place-items-center"><span className="h-px w-2.5 bg-white" /></button>
        <button aria-label="Maximize" className="grid h-full w-[46px] place-items-center"><span className="size-2.5 border border-white" /></button>
        <button aria-label="Close" className="grid h-full w-[46px] place-items-center">
          <svg viewBox="0 0 10 10" className="size-2.5" aria-hidden="true"><path d="M0 0l10 10M10 0L0 10" stroke="#fff" /></svg>
        </button>
      </header>
      <nav className="flex h-5 items-center gap-[15px] border-b border-[#d8d8d8] pl-2.5 font-['Open_Sans',sans-serif]">
        {MENUS.map((m) => {
          const i = m.indexOf("_");
          return <button key={m}>{m.slice(0, i)}<span className="underline">{m[i + 1]}</span>{m.slice(i + 2)}</button>;
        })}
      </nav>
      <Bar items="| newFile open save layout manager style | hand pan zoomIn zoomOut zoomFull zoomSel zoomLayer zoomNative zoomLast zoomNext newMap new3d bookmarkNew bookmarks clock refresh | identify attrs abacus gear sigma measure v tip action o textNote v" />
      <Bar items="| addLayer gpkgNew shpNew liteNew memNew / virtNew / | edits pencil saveEdits addPoly vertex o multi trash cut copy paste undoOff redoOff | python leaf m39 | hex globeAdd m29 | topo | help" />
      <Bar items="| labelY pie / labelPin labelR / labelPinOff labelEye labelMove labelRot m21 | select v selExpr v deselect v selLoc" />
      <div className="flex flex-1 pr-[3px] pb-px">
        <div className="flex w-[229px] shrink-0 flex-col">
          <BrowserDock />
          <div className="flex h-[6px] items-center justify-center"><span className="w-4 border-t border-dotted border-[#999]" /></div>
          <LayersDock />
        </div>
        <span className="w-1.5" />
        <MapCanvas />
        <div className="flex w-[9px] items-center justify-center"><span className="h-4 border-l border-dotted border-[#999]" /></div>
        <StylingDock />
      </div>
      <StatusBar />
    </div>
  );
}
